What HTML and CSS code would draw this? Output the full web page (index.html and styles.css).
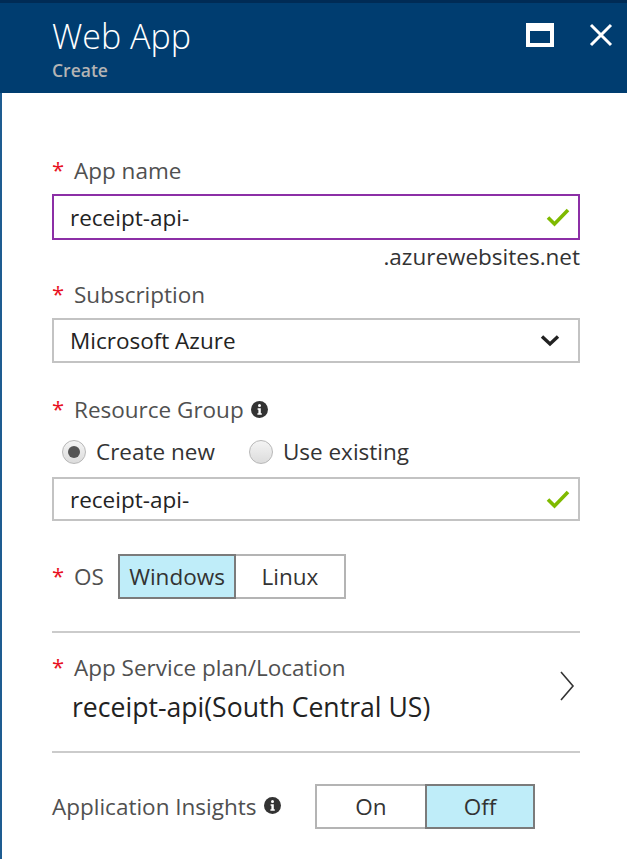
FILE: index.html
```html
<!DOCTYPE html>
<html>
<head>
<meta charset="utf-8">
<link rel="stylesheet" href="styles.css">
</head>
<body>
<div class="blade">
  <header class="head">
    <div class="titles">
      <div class="title">Web App</div>
      <div class="subtitle">Create</div>
    </div>
    <div class="head-actions">
      <svg class="ico-max" width="28" height="24" viewBox="0 0 28 24"><path d="M0 0H28V24H0Z M4 8V20H24V8Z" fill="#fff" fill-rule="evenodd"/></svg>
      <svg class="ico-close" width="24" height="24" viewBox="0 0 24 24"><path d="M2 2L22 22M22 2L2 22" stroke="#fff" stroke-width="3" fill="none"/></svg>
    </div>
  </header>
  <main class="content">
    <div class="label lbl-app"><span class="req">*</span>App name</div>
    <div class="field field-active">
      <span class="field-text">receipt-api-</span>
      <svg class="check" width="24" height="20" viewBox="0 0 24 20"><path d="M2 10.5L8.5 17L22 3" stroke="#7fba00" stroke-width="3.6" fill="none"/></svg>
    </div>
    <div class="suffix">.azurewebsites.net</div>

    <div class="label lbl-sub"><span class="req">*</span>Subscription</div>
    <div class="field field-select">
      <span class="field-text">Microsoft Azure</span>
      <svg class="chev-down" width="20" height="13" viewBox="0 0 20 13"><path d="M2 2.5L10 10L18 2.5" stroke="#222" stroke-width="3.4" fill="none"/></svg>
    </div>

    <div class="label lbl-rg"><span class="req">*</span>Resource Group<svg class="info" width="17" height="17" viewBox="0 0 17 17"><circle cx="8.5" cy="8.5" r="8.5" fill="#333"/><circle cx="8.5" cy="4.4" r="1.5" fill="#fff"/><path d="M6.6 7.2H9.8V12.3H10.8V13.8H6.4V12.3H7.4V8.7H6.6Z" fill="#fff"/></svg></div>
    <div class="radios">
      <div class="radio"><span class="dot checked"></span>Create new</div>
      <div class="radio"><span class="dot"></span>Use existing</div>
    </div>
    <div class="field field-rg">
      <span class="field-text">receipt-api-</span>
      <svg class="check" width="24" height="20" viewBox="0 0 24 20"><path d="M2 10.5L8.5 17L22 3" stroke="#7fba00" stroke-width="3.6" fill="none"/></svg>
    </div>

    <div class="os-row">
      <div class="label-inline"><span class="req">*</span>OS</div>
      <div class="toggle">
        <div class="opt opt-win selected">Windows</div>
        <div class="opt opt-linux">Linux</div>
      </div>
    </div>

    <div class="divider"></div>

    <div class="plan">
      <div class="plan-text">
        <div class="label lbl-plan"><span class="req">*</span>App Service plan/Location</div>
        <div class="plan-value">receipt-api(South Central US)</div>
      </div>
      <svg class="chev-right" width="16" height="30" viewBox="0 0 16 30"><path d="M2 1L14 15L2 29" stroke="#333" stroke-width="1.6" fill="none"/></svg>
    </div>

    <div class="divider divider-2"></div>

    <div class="insights-row">
      <div class="label-inline ai">Application Insights<svg class="info" width="17" height="17" viewBox="0 0 17 17"><circle cx="8.5" cy="8.5" r="8.5" fill="#333"/><circle cx="8.5" cy="4.4" r="1.5" fill="#fff"/><path d="M6.6 7.2H9.8V12.3H10.8V13.8H6.4V12.3H7.4V8.7H6.6Z" fill="#fff"/></svg></div>
      <div class="toggle toggle-ai">
        <div class="opt opt-on">On</div>
        <div class="opt opt-off selected">Off</div>
      </div>
    </div>
  </main>
</div>
</body>
</html>
```

FILE: styles.css
```css
html, body {
  margin: 0;
  padding: 0;
  background: #fff;
}
body {
  font-family: "Open Sans", "Noto Sans", sans-serif;
  color: #444;
  width: 627px;
  height: 859px;
  overflow: hidden;
}
.blade {
  border-left: 2px solid #1e5c91;
  height: 859px;
  box-sizing: border-box;
}
.head {
  background: #003d70;
  border-top: 3px solid #002b55;
  height: 90px;
  margin-left: -2px;
  padding: 0 14px 0 52px;
  display: flex;
  justify-content: space-between;
  align-items: flex-start;
}
.titles {
  padding-top: 11px;
}
.title {
  font-weight: 300;
  font-size: 34px;
  line-height: 44px;
  color: #fff;
}
.subtitle {
  font-weight: 600;
  font-size: 17.5px;
  line-height: 22px;
  color: #b4b4b4;
  margin-top: 1px;
}
.head-actions {
  display: flex;
  gap: 35px;
  padding-top: 20px;
}
.content {
  padding: 0 47px 0 50px;
}
.label {
  font-size: 22.5px;
  line-height: 30px;
  color: #505050;
  display: flex;
  align-items: center;
}
.req {
  color: #e81123;
  font-size: 22px;
  width: 22px;
  display: inline-block;
  position: relative;
  top: -2px;
}
.lbl-app { margin-top: 63px; }
.lbl-sub { margin-top: 8px; }
.lbl-rg { margin-top: 32px; }
.info {
  margin-left: 7px;
  position: relative;
  top: -1px;
}
.field {
  margin-top: 8px;
  height: 46px;
  border: 2px solid #c3c3c3;
  box-sizing: border-box;
  display: flex;
  align-items: center;
  justify-content: space-between;
  padding: 0 8px 0 16px;
}
.field-select { height: 45px; }
.field-rg { height: 44px; margin-top: 10px; }
.field-active {
  border-color: #8c2fa6;
}
.field-text {
  font-size: 22.5px;
  color: #232323;
}
.chev-down {
  margin-right: 10px;
}
.suffix {
  text-align: right;
  font-size: 22.5px;
  line-height: 30px;
  color: #333;
  margin-top: 2px;
}
.radios {
  display: flex;
  gap: 34px;
  margin-top: 12px;
  padding-left: 10px;
}
.radio {
  display: flex;
  align-items: center;
  font-size: 22.5px;
  color: #333;
  line-height: 30px;
}
.dot {
  width: 22px;
  height: 22px;
  border-radius: 50%;
  border: 1px solid #b8b8b8;
  background: linear-gradient(#f4f4f4, #dcdcdc);
  margin-right: 10px;
  position: relative;
}
.dot.checked::after {
  content: "";
  position: absolute;
  left: 5px;
  top: 5px;
  width: 12px;
  height: 12px;
  border-radius: 50%;
  background: #555;
}
.os-row {
  display: flex;
  align-items: center;
  margin-top: 33px;
}
.label-inline {
  font-size: 22.5px;
  line-height: 30px;
  color: #505050;
  display: flex;
  align-items: center;
  width: 66px;
}
.toggle {
  display: flex;
  height: 45px;
}
.opt {
  display: flex;
  align-items: center;
  justify-content: center;
  font-size: 22.5px;
  color: #333;
  border: 2px solid #b4b4b4;
  box-sizing: border-box;
}
.opt.selected {
  background: #bfedf9;
  border-color: #7b7b7b;
}
.opt-win { width: 118px; }
.opt-linux { width: 110px; border-left: none; }
.divider {
  height: 2px;
  background: #cbcbcb;
  margin-top: 32px;
}
.plan {
  display: flex;
  justify-content: space-between;
  align-items: flex-start;
  padding: 20px 5px 0 0;
}
.divider-2 { margin-top: 27px; }
.plan-value {
  font-size: 26.6px;
  line-height: 34px;
  color: #222;
  padding-left: 20px;
  margin-top: 7px;
}
.chev-right {
  margin-top: 18px;
}
.insights-row {
  display: flex;
  align-items: center;
  margin-top: 31px;
}
.ai {
  width: 263px;
}
.opt-on { width: 110px; border-right: none; }
.opt-off { width: 110px; }
```
